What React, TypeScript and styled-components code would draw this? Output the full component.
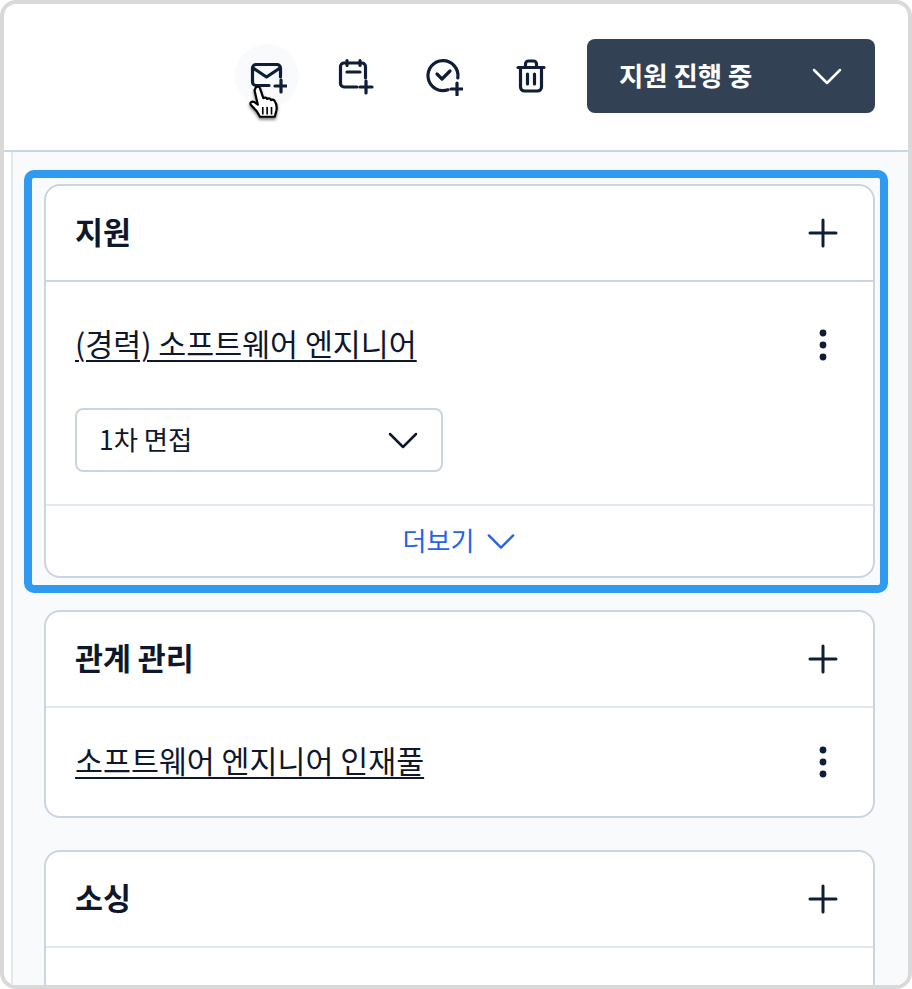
import React from 'react';
import styled, { createGlobalStyle } from 'styled-components';

const GlobalStyle = createGlobalStyle`
  html, body {
    margin: 0;
    height: 100%;
    background: #ffffff;
  }
  body {
    font-family: "Noto Sans CJK KR", "Noto Sans", sans-serif;
    color: #0f172a;
  }
  * {
    box-sizing: border-box;
  }
`;

const Frame = styled.div`
  position: relative;
  width: 912px;
  height: 989px;
  border: 4px solid #d9d9d9;
  border-radius: 16px;
  overflow: hidden;
  display: flex;
  flex-direction: column;
  background: #ffffff;
`;

const Toolbar = styled.header`
  flex: none;
  height: 148px;
  display: flex;
  align-items: center;
  justify-content: flex-end;
  gap: 24px;
  padding: 0 33px 2px 0;
  border-bottom: 2px solid #cbd5e1;
`;

const IconButton = styled.button<{ $hovered?: boolean }>`
  position: relative;
  width: 64px;
  height: 64px;
  padding: 0;
  border: 0;
  border-radius: 50%;
  display: flex;
  align-items: center;
  justify-content: center;
  background: ${(p) => (p.$hovered ? '#f8fafc' : 'transparent')};
  color: #0f1d36;
`;

const Cursor = styled.svg`
  position: absolute;
  left: 14px;
  top: 41px;
  filter: drop-shadow(0 2px 1.5px rgba(0, 0, 0, 0.5));
`;

// Noto sits lower in its line box than the reference face, so labels get lifted a little
const Label = styled.span`
  padding-bottom: 4px;
`;

const StatusButton = styled.button`
  width: 288px;
  height: 74px;
  padding: 0 32px;
  border: 0;
  border-radius: 8px;
  display: flex;
  align-items: center;
  justify-content: space-between;
  background: #334155;
  color: #ffffff;
  font: 700 26.4px "Noto Sans CJK KR", sans-serif;
`;

const Body = styled.main`
  flex: 1;
  min-height: 0;
  margin-left: 7px;
  padding: 32px 33px 0 31px;
  border-left: 2px solid #e2e8f0;
  background: #f8fafc;
  display: flex;
  flex-direction: column;
  gap: 32px;
`;

const Card = styled.section<{ $highlighted?: boolean }>`
  position: relative;
  flex: none;
  border: 2px solid #cbd5e1;
  border-radius: 16px;
  background: #ffffff;

  ${(p) =>
    p.$highlighted &&
    `
    &::after {
      content: '';
      position: absolute;
      inset: -16px -15px -17px -22px;
      border: 8px solid #2f9bf0;
      border-radius: 10px;
      pointer-events: none;
    }
  `}
`;

const CardHeader = styled.div<{ $strong?: boolean }>`
  height: 96px;
  padding: 0 30px 0 29px;
  display: flex;
  align-items: center;
  justify-content: space-between;
  border-bottom: 2px solid ${(p) => (p.$strong ? '#cbd5e1' : '#e2e8f0')};
`;

const CardTitle = styled.h2`
  margin: 0;
  padding-bottom: 4px;
  font-size: 30.4px;
  font-weight: 700;
  color: #0f172a;
`;

const PlainIcon = styled.button`
  width: 40px;
  height: 40px;
  padding: 0;
  border: 0;
  background: transparent;
  display: flex;
  align-items: center;
  justify-content: center;
  color: #0f1d36;
`;

const Row = styled.div<{ $height: number }>`
  height: ${(p) => p.$height}px;
  padding: 0 30px 0 29px;
  display: flex;
  align-items: center;
  justify-content: space-between;
`;

const ItemLink = styled.a`
  padding-bottom: 4px;
  font-size: 30.4px;
  color: #0f172a;
  text-decoration: underline;
  text-decoration-thickness: 2px;
  text-underline-offset: 4px;
`;

const SelectWrap = styled.div`
  padding: 0 29px 32px;
`;

const Select = styled.button`
  width: 368px;
  height: 64px;
  padding: 0 22px;
  border: 2px solid #cbd5e1;
  border-radius: 8px;
  background: #ffffff;
  display: flex;
  align-items: center;
  justify-content: space-between;
  color: #0f172a;
  font: 400 26.4px "Noto Sans CJK KR", sans-serif;
`;

const MoreRow = styled.div`
  height: 72px;
  border-top: 2px solid #e2e8f0;
  display: flex;
  align-items: center;
  justify-content: center;
  gap: 12px;
  color: #2563eb;
  font-size: 26px;
`;

const Plus = () => (
  <svg width="40" height="40" viewBox="0 0 40 40" fill="none" stroke="currentColor" strokeWidth="3" strokeLinecap="round">
    <path d="M20 7v26M7 20h26" />
  </svg>
);

const Dots = () => (
  <svg width="40" height="40" viewBox="0 0 40 40" fill="currentColor">
    <circle cx="20" cy="8" r="3.4" />
    <circle cx="20" cy="20" r="3.4" />
    <circle cx="20" cy="32" r="3.4" />
  </svg>
);

const Chevron = ({ size = 32, width = 2.5 }: { size?: number; width?: number }) => (
  <svg width={size} height={size} viewBox="0 0 32 32" fill="none" stroke="currentColor" strokeWidth={width} strokeLinecap="round" strokeLinejoin="round">
    <path d="M3 10l13 13 13-13" />
  </svg>
);

const ToolIcon = ({ children }: { children: React.ReactNode }) => (
  <svg width="40" height="40" viewBox="0 0 40 40" fill="none" stroke="currentColor" strokeWidth="3.2" strokeLinecap="round" strokeLinejoin="round">
    {children}
  </svg>
);

export default function App() {
  return (
    <>
      <GlobalStyle />
      <Frame>
        <Toolbar>
          <IconButton $hovered>
            <ToolIcon>
              <path d="M22 29.500H9a3.500 3.500 0 0 1-3.500-3.500V12A3.500 3.500 0 0 1 9 8.500h21a3.500 3.500 0 0 1 3.500 3.500v9" />
              <path d="M6 12l13.500 9L33 12" />
              <path d="M34 24v12M28 30h12" />
            </ToolIcon>
            <Cursor width="33" height="35" viewBox="0 0 30 32">
              <path
                d="M6 2.500c1.500-1.500 3.500-1 4 .5l3 9c1.500-1 3-.5 3.500.8 1.500-1 3-.5 3.500 1 1.500-.8 3-.2 3.500 1.200 1.500 2 2 5 1.500 8l-1.500 6H10l-3-5L1.500 18c-1-2 1-3.500 3-2.500l3.500 2.500L5 5z"
                fill="#ffffff"
                stroke="#000000"
                strokeWidth="2"
                strokeLinejoin="round"
              />
              <path d="M12.500 20v7M16.500 20v7M20.500 20v7" stroke="#000000" strokeWidth="1.500" />
            </Cursor>
          </IconButton>
          <IconButton>
            <ToolIcon>
              <path d="M22 31H9a3.500 3.500 0 0 1-3.500-3.500V10.500A3.500 3.500 0 0 1 9 7h18a3.500 3.500 0 0 1 3.500 3.500V22" />
              <path d="M12 4.500v5M25 4.500v5M12 16h13" />
              <path d="M31 25v12M25 31h12" />
            </ToolIcon>
          </IconButton>
          <IconButton>
            <ToolIcon>
              <path d="M25 33.800A15 15 0 1 1 34.800 22" />
              <path d="M14 18l5 5 8-8" />
              <path d="M34 27v12M28 33h12" />
            </ToolIcon>
          </IconButton>
          <IconButton>
            <ToolIcon>
              <path d="M7 11.500h26M14.500 11.500V8a3 3 0 0 1 3-3h5a3 3 0 0 1 3 3v3.500" />
              <path d="M9.500 11.500V31a4 4 0 0 0 4 4h13a4 4 0 0 0 4-4V11.500" />
              <path d="M16.500 18v10M23.500 18v10" />
            </ToolIcon>
          </IconButton>
          <StatusButton>
            <Label>지원 진행 중</Label>
            <Chevron />
          </StatusButton>
        </Toolbar>
        <Body>
          <Card $highlighted>
            <CardHeader $strong>
              <CardTitle>지원</CardTitle>
              <PlainIcon>
                <Plus />
              </PlainIcon>
            </CardHeader>
            <Row $height={126}>
              <ItemLink>(경력) 소프트웨어 엔지니어</ItemLink>
              <PlainIcon>
                <Dots />
              </PlainIcon>
            </Row>
            <SelectWrap>
              <Select>
                <Label>1차 면접</Label>
                <Chevron />
              </Select>
            </SelectWrap>
            <MoreRow>
              <Label>더보기</Label>
              <Chevron size={30} />
            </MoreRow>
          </Card>
          <Card>
            <CardHeader>
              <CardTitle>관계 관리</CardTitle>
              <PlainIcon>
                <Plus />
              </PlainIcon>
            </CardHeader>
            <Row $height={108}>
              <ItemLink>소프트웨어 엔지니어 인재풀</ItemLink>
              <PlainIcon>
                <Dots />
              </PlainIcon>
            </Row>
          </Card>
          <Card>
            <CardHeader>
              <CardTitle>소싱</CardTitle>
              <PlainIcon>
                <Plus />
              </PlainIcon>
            </CardHeader>
            <Row $height={108} />
          </Card>
        </Body>
      </Frame>
    </>
  );
}
